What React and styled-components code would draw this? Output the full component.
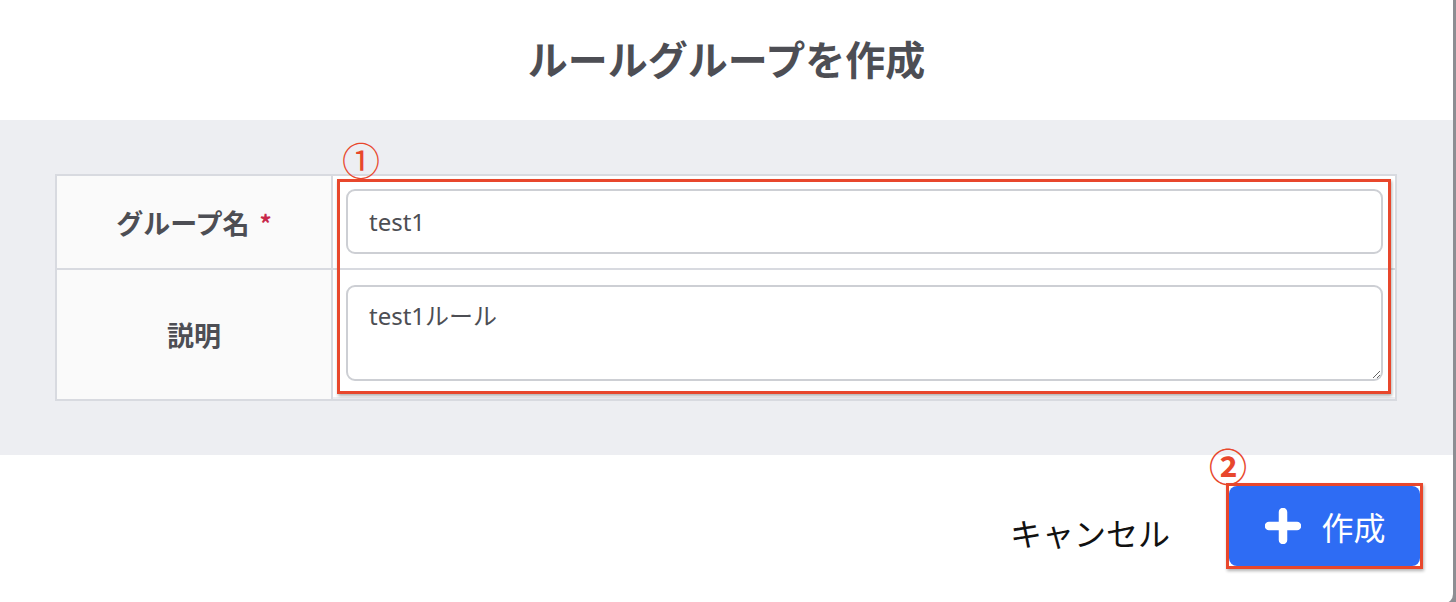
import React from 'react';
import styled, { createGlobalStyle } from 'styled-components';

const GlobalStyle = createGlobalStyle`
  html, body {
    margin: 0;
    padding: 0;
    background: #8d8e93;
    font-family: "Noto Sans", "Noto Sans CJK JP", sans-serif;
  }
`;

const Dialog = styled.div`
  width: 1453px;
  background: white;
  border-bottom-right-radius: 10px;
  overflow: hidden;
`;

const Header = styled.div`
  height: 120px;
  display: flex;
  align-items: center;
  justify-content: center;
`;

const Title = styled.h2`
  margin: 0;
  font-size: 40px;
  font-weight: 700;
  color: #4d4e54;
  font-family: "Noto Sans CJK JP", sans-serif;
  transform: translateY(-2px);
`;

const Body = styled.div`
  background: #edeef2;
  padding: 54px 56px 54px 55px;
`;

const FormTable = styled.div`
  position: relative;
  border: 2px solid #d8dae0;
  display: grid;
  grid-template-columns: 276px 1fr;
`;

const LabelCell = styled.div`
  background: #fafafa;
  border-right: 2px solid #d8dae0;
  border-top: ${props => (props.first ? 'none' : '2px solid #d8dae0')};
  display: flex;
  align-items: center;
  justify-content: center;
  height: ${props => props.height}px;
  font-family: "Noto Sans CJK JP", sans-serif;
  font-size: 27px;
  font-weight: 700;
  color: #4d4e54;
`;

const Required = styled.span`
  color: #c8284a;
  margin-left: 10px;
  font-size: 24px;
`;

const ValueCell = styled.div`
  background: #ffffff;
  border-top: ${props => (props.first ? 'none' : '2px solid #d8dae0')};
  padding: ${props => props.pad};
  height: ${props => props.height}px;
  box-sizing: border-box;
`;

const TextInput = styled.input`
  width: 100%;
  height: 65px;
  box-sizing: border-box;
  border: 2px solid #cdcfd4;
  border-radius: 9px;
  padding: 0 21px;
  font-family: "Noto Sans", "Noto Sans CJK JP", sans-serif;
  font-size: 24px;
  color: #4d4e54;
  background: white;
  outline: none;
`;

const TextArea = styled.textarea`
  display: block;
  width: 100%;
  height: 96px;
  box-sizing: border-box;
  border: 2px solid #cdcfd4;
  border-radius: 9px;
  padding: 10px 21px;
  font-family: "Noto Sans", "Noto Sans CJK JP", sans-serif;
  font-size: 24px;
  color: #4d4e54;
  background: white;
  outline: none;
  resize: vertical;
`;

const HighlightBox = styled.div`
  position: absolute;
  left: 280px;
  top: 3px;
  right: 4px;
  bottom: 5px;
  border: 3px solid #e8472c;
  box-shadow: 1px 2px 3px rgba(0, 0, 0, 0.3);
  pointer-events: none;
`;

const Marker = styled.span`
  position: absolute;
  left: ${props => props.left}px;
  top: ${props => props.top}px;
  color: #e8472c;
  font-family: "Noto Sans CJK JP", sans-serif;
  font-size: ${props => props.size || 36}px;
  font-weight: ${props => props.weight || 400};
  line-height: 1;
`;

const Footer = styled.div`
  height: 149px;
  box-sizing: border-box;
  display: flex;
  justify-content: flex-end;
  align-items: center;
  padding: 0 30px 0 0;
`;

const CancelButton = styled.button`
  background: none;
  border: none;
  padding: 0;
  margin: 4px 56px 0 0;
  font-family: "Noto Sans CJK JP", sans-serif;
  font-size: 32px;
  color: #111;
  cursor: pointer;
`;

const ButtonFrame = styled.div`
  position: relative;
  border: 3px solid #e8472c;
  box-shadow: 1px 2px 3px rgba(0, 0, 0, 0.3);
  display: flex;
  margin-top: -8px;
`;

const CreateButton = styled.button`
  width: 191px;
  height: 80px;
  background: #2e6cf4;
  border: none;
  border-radius: 8px;
  display: flex;
  align-items: center;
  justify-content: center;
  gap: 20px;
  padding: 0 0 0 2px;
  color: white;
  font-family: "Noto Sans CJK JP", sans-serif;
  font-size: 32px;
  cursor: pointer;
`;

const PlusIcon = () => (
  <svg width="36" height="36" viewBox="0 0 36 36">
    <path d="M18 4 V32 M4 18 H32" stroke="white" strokeWidth="8.5" strokeLinecap="round" />
  </svg>
);

export default function App() {
  return (
    <>
      <GlobalStyle />
      <Dialog>
        <Header>
          <Title>ルールグループを作成</Title>
        </Header>
        <Body>
          <FormTable>
            <LabelCell first height={92}>
              グループ名<Required>*</Required>
            </LabelCell>
            <ValueCell first height={92} pad="13px 12px 0 13px">
              <TextInput defaultValue="test1" />
            </ValueCell>
            <LabelCell height={129}>説明</LabelCell>
            <ValueCell height={129} pad="15px 12px 0 13px">
              <TextArea defaultValue="test1ルール" />
            </ValueCell>
            <HighlightBox />
            <Marker left={285} top={-36} size={38}>①</Marker>
          </FormTable>
        </Body>
        <Footer>
          <CancelButton>キャンセル</CancelButton>
          <ButtonFrame>
            <CreateButton>
              <PlusIcon />
              作成
            </CreateButton>
            <Marker left={-20} top={-40} size={38} weight={700}>②</Marker>
          </ButtonFrame>
        </Footer>
      </Dialog>
    </>
  );
}
